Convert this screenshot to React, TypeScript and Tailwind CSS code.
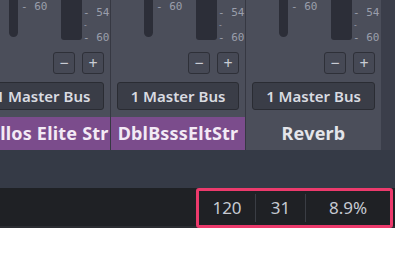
const strips = [
	{ name: 'Cellos Elite Str', purple: true, buttons: true },
	{ name: 'DblBsssEltStr', purple: true, buttons: true },
	{ name: 'Reverb', purple: false, buttons: true },
];

function Strip({
	name,
	purple,
	buttons,
	last,
}: {
	name: string;
	purple: boolean;
	buttons: boolean;
	last: boolean;
}) {
	return (
		<div
			className={`flex w-[135px] shrink-0 flex-col bg-[#4b4e5a] ${
				last ? '' : 'border-r border-[#363842]'
			}`}
		>
			<div
				className="flex h-[48px] pl-[33px] text-[11px] leading-[11px] text-[#9a9eab]"
				style={{ fontFamily: '"DejaVu Sans Mono", monospace' }}
			>
				<div className="h-[37px] w-[9px] rounded-b-full bg-[#2c2e38]" />
				<div className="w-[43px] pl-[3px] pt-[1px]">- 60</div>
				<div className="h-[40px] w-[21px] rounded-b-[3px] bg-[#2c2e38]" />
				<div className="flex flex-col pl-[1px]">
					<span className="mt-[7px]">- 54</span>
					<span className="mt-[2px] text-[8px]">-</span>
					<span className="mt-[1px]">- 60</span>
				</div>
			</div>
			<div
				className={`mt-[4px] flex h-[22px] justify-end gap-[7px] pr-[6px] ${
					buttons ? '' : 'invisible'
				}`}
			>
				<div className="flex w-[22px] items-center justify-center rounded-[3px] border border-[#2e3038] bg-[#464955] text-[16px] leading-none text-[#c9ccd4]">
					−
				</div>
				<div className="flex w-[22px] items-center justify-center rounded-[3px] border border-[#2e3038] bg-[#464955] text-[16px] leading-none text-[#c9ccd4]">
					+
				</div>
			</div>
			<div className="mx-[6px] mt-[8px] flex h-[28px] items-center justify-center rounded-[3px] border border-[#2a2c33] bg-[#3a3d47] text-[15px] font-semibold text-[#d9dbe1]">
				1 Master Bus
			</div>
			<div
				className={`mt-[7px] flex h-[33px] items-center justify-center overflow-hidden whitespace-nowrap text-[18px] font-bold tracking-[0.2px] ${
					purple ? 'bg-[#7b4c8c] text-[#f3eaf5]' : 'text-[#e4e5ea]'
				}`}
			>
				{name}
			</div>
		</div>
	);
}

export default function App() {
	return (
		<div
			className="w-[395px] overflow-hidden bg-white"
			style={{ fontFamily: '"Noto Sans", "Open Sans", sans-serif' }}
		>
			<div className="flex h-[150px] bg-[#3b3e4a]">
				<div className="ml-[-24px] flex">
					{strips.map((s, i) => (
						<Strip key={i} {...s} last={i === strips.length - 1} />
					))}
				</div>
			</div>
			<div className="h-[38px] bg-[#353a46]" />
			<div className="flex h-[40px] items-stretch border-b-[2px] border-[#2b2d32] bg-[#1f2125]">
				<div className="ml-auto mr-[2px] flex h-[40px] w-[197px] rounded-[3px] border-[3px] border-[#ec3a6c] text-[17px] text-[#c6cad2]">
					<div className="flex w-[56px] items-center justify-center">120</div>
					<div className="my-[3px] w-px bg-[#3a3d44]" />
					<div className="flex w-[49px] items-center justify-center">31</div>
					<div className="my-[3px] w-px bg-[#3a3d44]" />
					<div className="flex flex-1 items-center justify-center">8.9%</div>
				</div>
			</div>
		</div>
	);
}
